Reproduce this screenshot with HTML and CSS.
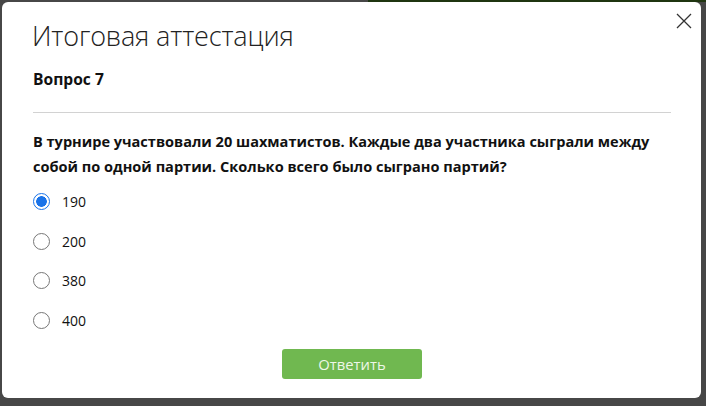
FILE: index.html
```html
<!DOCTYPE html>
<html lang="ru">
<head>
<meta charset="utf-8">
<link rel="stylesheet" href="styles.css">
</head>
<body>
<div class="modal">
  <button class="close" aria-label="Закрыть">
    <svg width="16" height="16" viewBox="0 0 16 16"><path d="M1 1L15 15M15 1L1 15" stroke="#333" stroke-width="1.3" fill="none"/></svg>
  </button>
  <h1 class="title">Итоговая аттестация</h1>
  <h2 class="qnum">Вопрос 7</h2>
  <hr class="sep">
  <p class="question">В турнире участвовали 20 шахматистов. Каждые два участника сыграли между собой по одной партии. Сколько всего было сыграно партий?</p>
  <div class="options">
    <label class="opt"><span class="radio checked"></span><span>190</span></label>
    <label class="opt"><span class="radio"></span><span>200</span></label>
    <label class="opt"><span class="radio"></span><span>380</span></label>
    <label class="opt"><span class="radio"></span><span>400</span></label>
  </div>
  <div class="actions"><button class="submit">Ответить</button></div>
</div>
</body>
</html>
```
FILE: styles.css
```css
html, body { margin: 0; padding: 0; }
body {
  width: 706px; height: 406px; overflow: hidden;
  background: linear-gradient(to right, #474747 368px, #1f3510 368px) top left / 100% 2px no-repeat, #474747;
  font-family: "Open Sans", "Noto Sans", sans-serif;
  color: #111;
}
.modal {
  position: relative;
  margin: 2px 0 0 2px;
  width: 699px; height: 396px;
  box-sizing: border-box;
  background: #fff;
  border-radius: 6px;
  padding: 15px 30px 0 31px;
}
.close {
  position: absolute; top: 11px; right: 9px;
  width: 16px; height: 16px; padding: 0; border: 0; background: none; cursor: pointer;
}
.close svg { display: block; }
.title {
  margin: 0 0 0 -1px; font-weight: 300; font-size: 27px; line-height: 38px; color: #222;
  letter-spacing: -0.15px;
}
.qnum { margin: 14px 0 0; font-size: 15.6px; font-weight: 700; line-height: 20px; }
.sep { margin: 23px 0 0; border: 0; border-top: 1px solid #d2d2d2; height: 0; }
.question {
  margin: 16px 0 0; font-size: 14.55px; font-weight: 700; line-height: 25px; color: #111;
}
.options { margin-top: 3px; display: flex; flex-direction: column; }
.opt { display: flex; align-items: center; height: 39.6px; font-size: 14px; gap: 12px; color: #111; }
.radio {
  width: 17px; height: 17px; box-sizing: border-box; border-radius: 50%;
  border: 1px solid #777; background: #fff; flex: none;
}
.radio.checked { border-color: #1a73e8; background: radial-gradient(circle, #1a73e8 0 5px, #fff 5.6px); }
.actions { display: flex; justify-content: center; margin-top: 9px; }
.submit {
  width: 140px; height: 30px; border: 0; border-radius: 3px;
  background: #70b850; color: #eef7e8;
  font-family: "Open Sans", sans-serif; font-size: 14.8px;
}
```
